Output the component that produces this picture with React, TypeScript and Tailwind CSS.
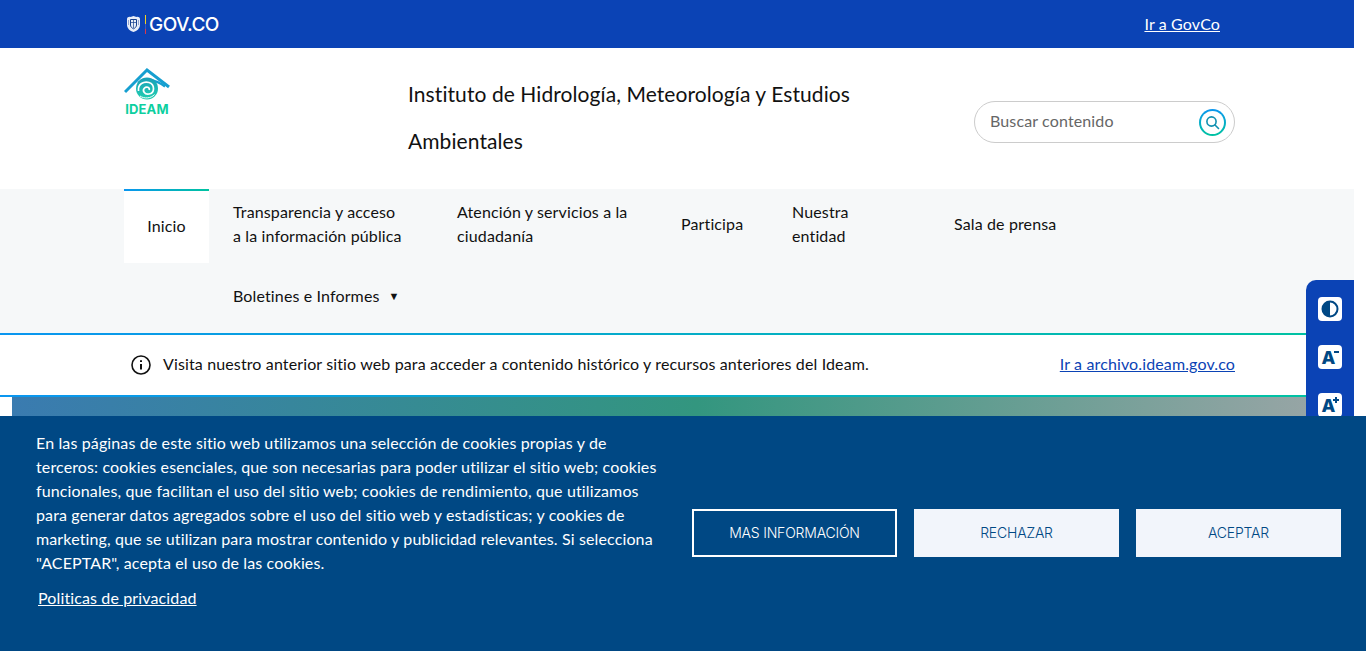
import React from "react";

const navFirstRow = [
  { label: "Transparencia y acceso\na la información pública", width: "w-[224px]" },
  { label: "Atención y servicios a la\nciudadanía", width: "w-[224px]" },
  { label: "Participa", width: "w-[111px]" },
  { label: "Nuestra entidad", width: "w-[162px]" },
  { label: "Sala de prensa", width: "" },
];

const GovLogo = () => (
  <div className="flex items-center">
    <svg width="15" height="18" viewBox="0 0 15 18" fill="none">
      <path d="M1 4 C1 2.5 3 1.5 4.5 2 L7.5 1 L10.5 2 C12 1.5 14 2.5 14 4 L14 9.5 C14 13.5 11 16 7.5 17 C4 16 1 13.5 1 9.5 Z" fill="#e8edf8" />
      <path d="M4.5 4.5 H10.5 V10 C10.5 11.8 9.2 13 7.5 13.8 C5.8 13 4.5 11.8 4.5 10 Z" fill="none" stroke="#17408f" strokeWidth="1" />
      <path d="M4.5 7.5 H10.5 M7.5 4.5 V13" stroke="#17408f" strokeWidth="0.7" />
      <path d="M2.5 5 V10 M12.5 5 V10" stroke="#7d92c8" strokeWidth="0.8" />
    </svg>
    <div className="w-px h-[19px] ml-[4px] flex flex-col">
      <div className="h-[9px] bg-[#f5d020]" />
      <div className="h-[5px] bg-[#3a5bc0]" />
      <div className="h-[5px] bg-[#d83a4a]" />
    </div>
    <span className="ml-[3px] text-[19px] leading-none font-[Inter,sans-serif] font-medium text-white tracking-[-0.55px]">GOV.CO</span>
  </div>
);

const IdeamLogo = () => (
  <div className="w-[46px] flex flex-col items-center">
    <svg width="46" height="33" viewBox="0 0 46 33" fill="none">
      <defs>
        <linearGradient id="eye" x1="0" y1="0" x2="0" y2="1">
          <stop offset="0" stopColor="#1a9fb8" />
          <stop offset="1" stopColor="#20d0b0" />
        </linearGradient>
      </defs>
      <path d="M1 24 L23 2 L45 19" stroke="#169fd0" strokeWidth="3" />
      <path d="M14 15 C21 10 31 11 41 18.5" stroke="#169fd0" strokeWidth="2.2" />
      <circle cx="23" cy="20.5" r="11" fill="url(#eye)" />
      <path d="M14.5 23 C13.5 16 20 13 25 14.5 C31 16.5 31 25 25 26 C20.5 26.8 18 22.5 20.5 20 C22.5 18 26 19.5 25.2 22" stroke="#fff" strokeWidth="1.7" />
      <path d="M16 28 C20 31 27 30.5 30.5 26.5" stroke="#fff" strokeWidth="1" />
    </svg>
    <span className="mt-[2px] text-[13px] leading-[13px] font-bold font-[Inter,sans-serif] text-[#0dcf9f] tracking-[0.1px]">IDEAM</span>
  </div>
);

const SearchButton = () => (
  <div className="w-[27px] h-[27px] rounded-full bg-linear-to-b/srgb from-[#0a96f0] to-[#00c3a0] p-[2px]">
    <div className="w-full h-full rounded-full bg-white flex items-center justify-center">
      <svg width="15" height="15" viewBox="0 0 15 15" fill="none" stroke="#0f8fb0" strokeWidth="1.6" strokeLinecap="round">
        <circle cx="6.5" cy="6.5" r="4.6" />
        <path d="M10 10 L13.5 13.5" />
      </svg>
    </div>
  </div>
);

const RailButton = ({ children }: { children: React.ReactNode }) => (
  <div className="w-6 h-6 bg-white rounded-[4px] flex items-center justify-center relative text-[#004884]">
    {children}
  </div>
);

const SideRail = () => (
  <div className="absolute left-[1306px] top-[280px] w-12 h-[200px] bg-[#0b43b5] rounded-tl-[10px] flex flex-col items-center gap-6 pt-[17px]">
    <RailButton>
      <svg width="18" height="18" viewBox="0 0 18 18">
        <circle cx="9" cy="9" r="7.5" fill="none" stroke="#004884" strokeWidth="2" />
        <path d="M9 1.5 A7.5 7.5 0 0 0 9 16.5 Z" fill="#004884" />
      </svg>
    </RailButton>
    <RailButton>
      <span className="text-[18px] leading-none font-extrabold font-[Inter,sans-serif] -ml-[3px] mt-[2px]">A</span>
      <span className="absolute right-[3px] top-[6px] w-[5px] h-[2px] bg-[#004884]" />
    </RailButton>
    <RailButton>
      <span className="text-[18px] leading-none font-extrabold font-[Inter,sans-serif] -ml-[3px] mt-[2px]">A</span>
      <span className="absolute right-[3px] top-[6px] w-[6px] h-[2px] bg-[#004884]" />
      <span className="absolute right-[5px] top-[4px] w-[2px] h-[6px] bg-[#004884]" />
    </RailButton>
  </div>
);

const GradientLine = () => <div className="h-0.5 bg-linear-to-r/srgb from-[#0a96f0] to-[#00c3a0]" />;

const CookieBanner = () => (
  <div className="absolute left-0 bottom-0 w-[1366px] h-[235px] bg-[#004884] text-white flex items-center pl-9 pr-[25px]">
    <div className="w-[656px] shrink-0 self-start pt-[15px]">
      <p className="w-[630px] text-[16px] leading-6">
        En las páginas de este sitio web utilizamos una selección de cookies propias y de terceros: cookies esenciales, que son necesarias para poder utilizar el sitio web; cookies funcionales, que facilitan el uso del sitio web; cookies de rendimiento, que utilizamos para generar datos agregados sobre el uso del sitio web y estadísticas; y cookies de marketing, que se utilizan para mostrar contenido y publicidad relevantes. Si selecciona "ACEPTAR", acepta el uso de las cookies.
      </p>
      <a className="inline-block mt-[11px] ml-0.5 underline text-[16px] leading-6">Politicas de privacidad</a>
    </div>
    <div className="flex gap-[17px] mb-[2px] text-[14px] font-[Inter,sans-serif] font-light tracking-[-0.2px]">
      <button className="w-[205px] h-12 border-2 border-white text-white">MAS INFORMACIÓN</button>
      <button className="w-[205px] h-12 bg-[#f2f5fb] text-[#004884]">RECHAZAR</button>
      <button className="w-[205px] h-12 bg-[#f2f5fb] text-[#004884]">ACEPTAR</button>
    </div>
  </div>
);

const App: React.FC = () => {
  return (
    <div className="relative w-[1366px] h-[651px] overflow-hidden bg-white text-[#111] font-[Lato,sans-serif] tracking-[0.13px]">
      <div className="w-[1354px]">
        <div className="h-12 bg-[#0b43b5] flex items-center justify-between pl-[126px] pr-[134px]">
          <GovLogo />
          <a className="text-white underline text-[16px]">Ir a GovCo</a>
        </div>

        <div className="h-[141px] flex pl-[124px]">
          <div className="w-[284px] pt-5">
            <IdeamLogo />
          </div>
          <h1 className="w-[500px] pt-[22px] text-[21px] leading-[47px] font-normal tracking-[0.08px]">
            Instituto de Hidrología, Meteorología y Estudios Ambientales
          </h1>
          <div className="ml-[66px] mt-[53px] w-[261px] h-[42px] border border-[#ccc] rounded-full flex items-center justify-between pl-[15px] pr-2">
            <span className="text-[16px] text-[#666] pb-[2px]">Buscar contenido</span>
            <SearchButton />
          </div>
        </div>

        <div className="h-36 bg-[#f6f8f9] pl-[124px]">
          <div className="flex">
            <div className="w-[85px] h-[74px] bg-white shrink-0">
              <GradientLine />
              <div className="h-[72px] pb-[2px] flex items-center justify-center text-[16px]">Inicio</div>
            </div>
            {navFirstRow.map((item) => (
              <div key={item.label} className={`${item.width} h-[72px] px-6 pb-[2px] flex items-center text-[16px] leading-6 shrink-0 whitespace-pre-line`}>
                {item.label}
              </div>
            ))}
          </div>
          <div className="-mt-0.5 ml-[85px] h-[72px] px-6 pb-[2px] flex items-center text-[16px] gap-[9px]">
            Boletines e Informes
            <span className="text-[11px]">▼</span>
          </div>
        </div>

        <GradientLine />
        <div className="h-[60px] flex items-center pl-[131px] pr-[119px] text-[16px]">
          <svg width="20" height="20" viewBox="0 0 20 20" fill="none" stroke="#111" strokeWidth="1.6" className="shrink-0">
            <circle cx="10" cy="10" r="9" />
            <path d="M10 9 V14.5" strokeWidth="2" />
            <path d="M10 5.2 V7" strokeWidth="2" />
          </svg>
          <span className="ml-3 pb-[2px]">Visita nuestro anterior sitio web para acceder a contenido histórico y recursos anteriores del Ideam.</span>
          <a className="ml-auto pb-[2px] text-[#0b43b5] underline">Ir a archivo.ideam.gov.co</a>
        </div>
        <GradientLine />

        <div className="ml-3 h-[250px] bg-linear-to-r/srgb from-[#3a7bb0] via-[#33967f] via-51% to-[#9ea6a8]" />
      </div>

      <SideRail />
      <CookieBanner />
    </div>
  );
};

export default App;
